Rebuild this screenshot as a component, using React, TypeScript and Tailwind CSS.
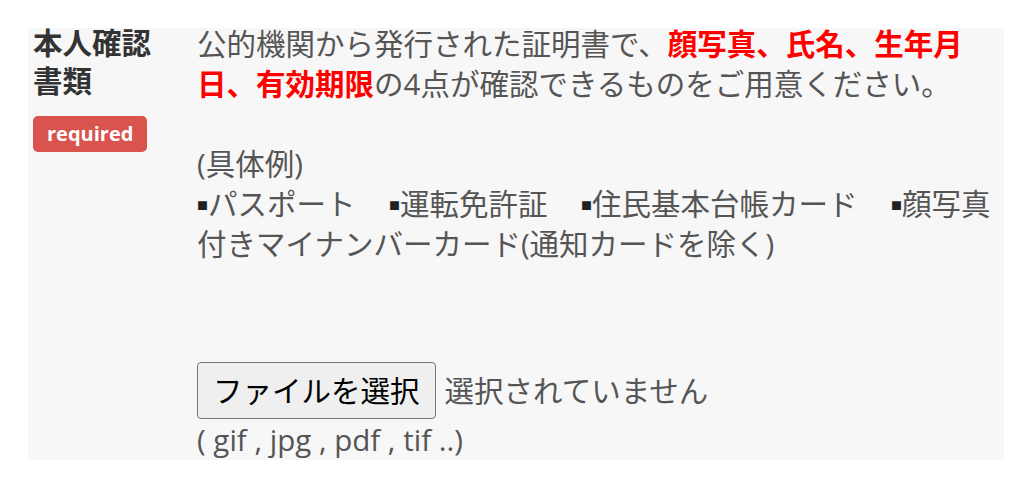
const FONT = 'font-["Open_Sans","Noto_Sans_CJK_JP",sans-serif]'

function Bullet({ first = false }: { first?: boolean }) {
  // small black square bullet
  return (
    <span className={`inline-block leading-none text-[11px] text-[#222] align-[5px] ${first ? '' : 'ml-[4px]'}`}>■</span>
  )
}

export default function App() {
  return (
    <div className={`w-[1024px] h-[489px] bg-white pt-[28px] ${FONT}`}>
      <div className="ml-[28px] mr-[20px] bg-[#f7f7f7] flex">
        {/* Label column */}
        <div className="w-[169px] shrink-0 pl-[5px] pr-[30px] -mt-[4px]">
          <p className="text-[29.5px] leading-[38px] font-bold text-[#333]">本人確認書類</p>
          <span className='mt-[16px] inline-flex items-center h-[36px] px-[14px] rounded-[5px] bg-[#d9534f] text-white text-[20px] font-bold font-["Open_Sans",sans-serif]'>
            required
          </span>
        </div>

        {/* Content column */}
        <div className="flex-1 -mt-[4px] text-[29.5px] leading-[40px] text-[#555]">
          <p>
            <span>公的機関から発行された証明書で、</span>
            <span className="font-bold text-[#ff0000]">顔写真、氏名、生年月</span>
            <br />
            <span className="font-bold text-[#ff0000]">日、有効期限</span>
            <span>の4点が確認できるものをご用意ください。</span>
          </p>
          <div className="h-[40px]" />
          <p>(具体例)</p>
          <p className="whitespace-nowrap">
            <Bullet first /><span>パスポート　</span>
            <Bullet /><span>運転免許証　</span>
            <Bullet /><span>住民基本台帳カード　</span>
            <Bullet /><span>顔写真</span>
          </p>
          <p>付きマイナンバーカード(通知カードを除く)</p>

          <div className="mt-[98px] flex items-center gap-[9px]">
            <button className="h-[57px] px-[15px] bg-[#efefef] border border-[#767676] rounded-[4px] text-black leading-[40px]">
              ファイルを選択
            </button>
            <span>選択されていません</span>
          </div>
          <p className="mt-[1px]">( gif , jpg , pdf , tif ..)</p>
        </div>
      </div>
    </div>
  )
}
